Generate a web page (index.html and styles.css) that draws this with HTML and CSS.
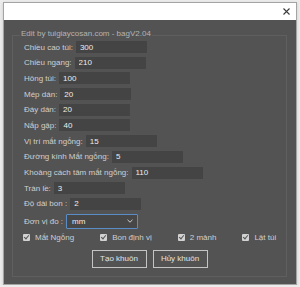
FILE: index.html
```html
<!DOCTYPE html>
<html lang="vi">
<head>
    <meta charset="UTF-8">
    <meta name="viewport" content="width=device-width, initial-scale=1.0">
    <title>bagV2.04</title>
    <link rel="stylesheet" href="styles.css">
</head>
<body>
    <div class="window">
        <div class="titlebar">
            <svg class="close" width="7" height="7" viewBox="0 0 7 7">
                <path d="M0.5 0.5 L6.5 6.5 M6.5 0.5 L0.5 6.5" stroke="#3a3a3a" stroke-width="1.1" fill="none"/>
            </svg>
        </div>
        <div class="panel">
            <fieldset class="group">
                <legend>Edit by tuigiaycosan.com - bagV2.04</legend>
                <div class="row"><label>Chiều cao túi:</label><input type="text" value="300"></div>
                <div class="row"><label>Chiều ngang:</label><input type="text" value="210"></div>
                <div class="row"><label>Hông túi:</label><input type="text" value="100"></div>
                <div class="row"><label>Mép dán:</label><input type="text" value="20"></div>
                <div class="row"><label>Đáy dán:</label><input type="text" value="20"></div>
                <div class="row"><label>Nắp gập:</label><input type="text" value="40"></div>
                <div class="row"><label>Vị trí mắt ngỗng:</label><input type="text" value="15"></div>
                <div class="row"><label>Đường kính Mắt ngỗng:</label><input type="text" value="5"></div>
                <div class="row"><label>Khoảng cách tâm mắt ngỗng:</label><input type="text" value="110"></div>
                <div class="row"><label>Tràn lề:</label><input type="text" value="3"></div>
                <div class="row"><label>Độ dài bon :</label><input type="text" value="2"></div>
                <div class="row unit-row">
                    <label>Đơn vị đo :</label>
                    <div class="select">
                        <span>mm</span>
                        <svg width="6" height="4" viewBox="0 0 6 4">
                            <path d="M0.5 0.8 L3 3.2 L5.5 0.8" stroke="#cfcfcf" stroke-width="1" fill="none"/>
                        </svg>
                    </div>
                </div>
                <div class="checks">
                    <label class="check"><span class="box"></span>Mắt Ngỗng</label>
                    <label class="check"><span class="box"></span>Bon định vị</label>
                    <label class="check"><span class="box"></span>2 mảnh</label>
                    <label class="check"><span class="box"></span>Lật túi</label>
                </div>
                <div class="buttons">
                    <button type="button">Tạo khuôn</button>
                    <button type="button">Hủy khuôn</button>
                </div>
            </fieldset>
        </div>
    </div>
</body>
</html>
```

FILE: styles.css
```css
body {
    margin: 0;
    background-color: #ececec;
    font-family: "Liberation Sans", Arial, sans-serif;
    font-size: 8px;
}
.window {
    margin: 2px 0 0 3px;
    width: 292px;
    border: 1px solid #a4a4a4;
    box-shadow: 0 1px 3px rgba(0, 0, 0, 0.15);
}
.titlebar {
    height: 17px;
    background-color: #fff;
    display: flex;
    align-items: center;
    justify-content: flex-end;
    padding-right: 6px;
}
.panel {
    background-color: #535353;
    padding: 9px 9px 7px 8px;
}
.group {
    margin: 0;
    border: 1px solid #5f5f5f;
    padding: 0 6px 8px 11px;
    display: flex;
    flex-direction: column;
    min-width: 0;
}
.group legend {
    color: #b4b4b4;
    line-height: 10px;
    padding: 0 1px 2px;
    margin-left: -4px;
}
.row {
    display: flex;
    align-items: center;
    margin-bottom: 3.7px;
    color: #cfcfcf;
}
.row label {
    margin-right: 3px;
    white-space: nowrap;
}
.row input {
    width: 71px;
    height: 12px;
    box-sizing: border-box;
    border: none;
    padding: 0 4px;
    background-color: #444;
    color: #ececec;
    font-family: inherit;
    font-size: 8px;
    outline: none;
}
.unit-row {
    margin-bottom: 4px;
}
.select {
    width: 72px;
    height: 15px;
    box-sizing: border-box;
    border: 1px solid #5a8cc6;
    border-radius: 1px;
    background-color: #474747;
    color: #ececec;
    display: flex;
    align-items: center;
    justify-content: space-between;
    padding: 0 4px 0 5px;
}
.checks {
    display: flex;
    align-items: center;
    gap: 26px;
    height: 10px;
    color: #cfcfcf;
    margin-left: -1px;
}
.check {
    display: flex;
    align-items: center;
    flex-shrink: 0;
    white-space: nowrap;
}
.check .box {
    width: 7px;
    height: 7px;
    margin-right: 5px;
    border-radius: 1px;
    background-color: #d2d2d2;
    position: relative;
}
.check .box::after {
    content: "";
    position: absolute;
    left: 2px;
    top: 0;
    width: 2px;
    height: 4px;
    border: solid #555;
    border-width: 0 1px 1px 0;
    transform: rotate(40deg);
}
.buttons {
    display: flex;
    justify-content: center;
    gap: 6px;
    margin-top: 7px;
    margin-left: -5px;
}
.buttons button {
    width: 55px;
    height: 18px;
    background-color: #535353;
    border: 1px solid #c4c4c4;
    color: #e2e2e2;
    font-family: inherit;
    font-size: 8px;
    padding: 0;
}
```
